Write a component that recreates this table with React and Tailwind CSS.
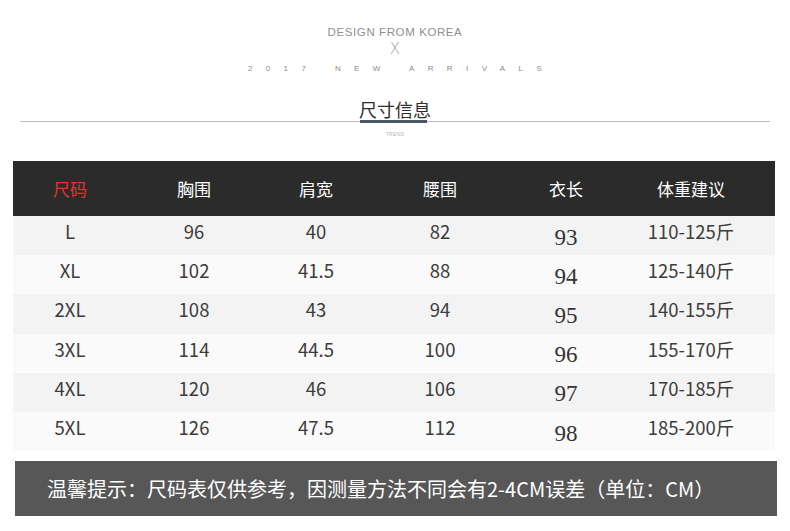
const rows = [
  ["L", "96", "40", "82", "93", "110-125斤"],
  ["XL", "102", "41.5", "88", "94", "125-140斤"],
  ["2XL", "108", "43", "94", "95", "140-155斤"],
  ["3XL", "114", "44.5", "100", "96", "155-170斤"],
  ["4XL", "120", "46", "106", "97", "170-185斤"],
  ["5XL", "126", "47.5", "112", "98", "185-200斤"],
];

const heads = ["尺码", "胸围", "肩宽", "腰围", "衣长", "体重建议"];

const cols = "grid grid-cols-[114px_134px_110px_138px_114px_136px_1fr]";
const cjk = "font-['Noto_Sans_CJK_SC','Noto_Sans',sans-serif]";

function App() {
  return (
    <div className="w-[790px] h-[531px] bg-white overflow-hidden">
      {/* banner */}
      <div className="flex flex-col items-center pt-[25px] font-['Liberation_Sans',Arial,sans-serif]">
        <div className="text-[11.5px] leading-[14px] tracking-[0.6px] text-[#8f8f8f]">DESIGN FROM KOREA</div>
        <div className="text-[15px] leading-[16px] mt-[2px] font-['DejaVu_Sans',sans-serif] font-extralight text-[#a0a0a0]">X</div>
        <div className="text-[8px] leading-[10px] mt-[7px] ml-[13px] tracking-[13.4px] text-[#8a8a8a]">2017 NEW ARRIVALS</div>
      </div>

      {/* title */}
      <div className="mt-[24px] flex flex-col items-center">
        <div className={`${cjk} text-[18px] leading-[22px] text-[#2e2e2e]`}>尺寸信息</div>
        <div className="mt-[1px] w-[750px] -ml-[1px] h-px bg-[#bdbdbd] flex justify-center">
          <div className="-mt-px w-[67px] h-[3px] bg-[#4a5766] -ml-[2px]" />
        </div>
        <div className="mt-[9px] text-[5px] leading-[6px] tracking-[0.3px] text-[#b5b5b5] font-['Liberation_Sans',sans-serif]">TREND</div>
      </div>

      {/* table */}
      <div className={`mt-[24px] ml-[13px] w-[762px] ${cjk}`}>
        <div className={`${cols} h-[55px] bg-[#2b2b2b] items-center text-[17px]`}>
          {heads.map((h, i) => (
            <div key={h} className={`text-center ${i === 0 ? "text-[#e2342c]" : "text-white"}`}>{h}</div>
          ))}
          <div />
        </div>
        {rows.map((r, ri) => (
          <div
            key={r[0]}
            className={`${cols} h-[39.2px] items-center text-[18.5px] text-[#3c3c3c] ${ri % 2 === 0 ? "bg-[#f3f3f3]" : "bg-[#fafafa]"}`}
          >
            {r.map((c, ci) => (
              <div
                key={ci}
                className={`text-center leading-[22px] ${ci === 4 ? "font-['Liberation_Serif',serif] text-[23px] pt-[4px] text-[#333]" : "-mt-[9px]"}`}
              >
                {c}
              </div>
            ))}
            <div />
          </div>
        ))}
      </div>

      {/* note */}
      <div className={`mt-[10px] ml-[15px] w-[762px] h-[55px] bg-[#575757] flex items-center pl-[32px] ${cjk} text-[20px] text-white`}>
        温馨提示：尺码表仅供参考，因测量方法不同会有2-4CM误差（单位：CM）
      </div>
    </div>
  );
}

export default App;
